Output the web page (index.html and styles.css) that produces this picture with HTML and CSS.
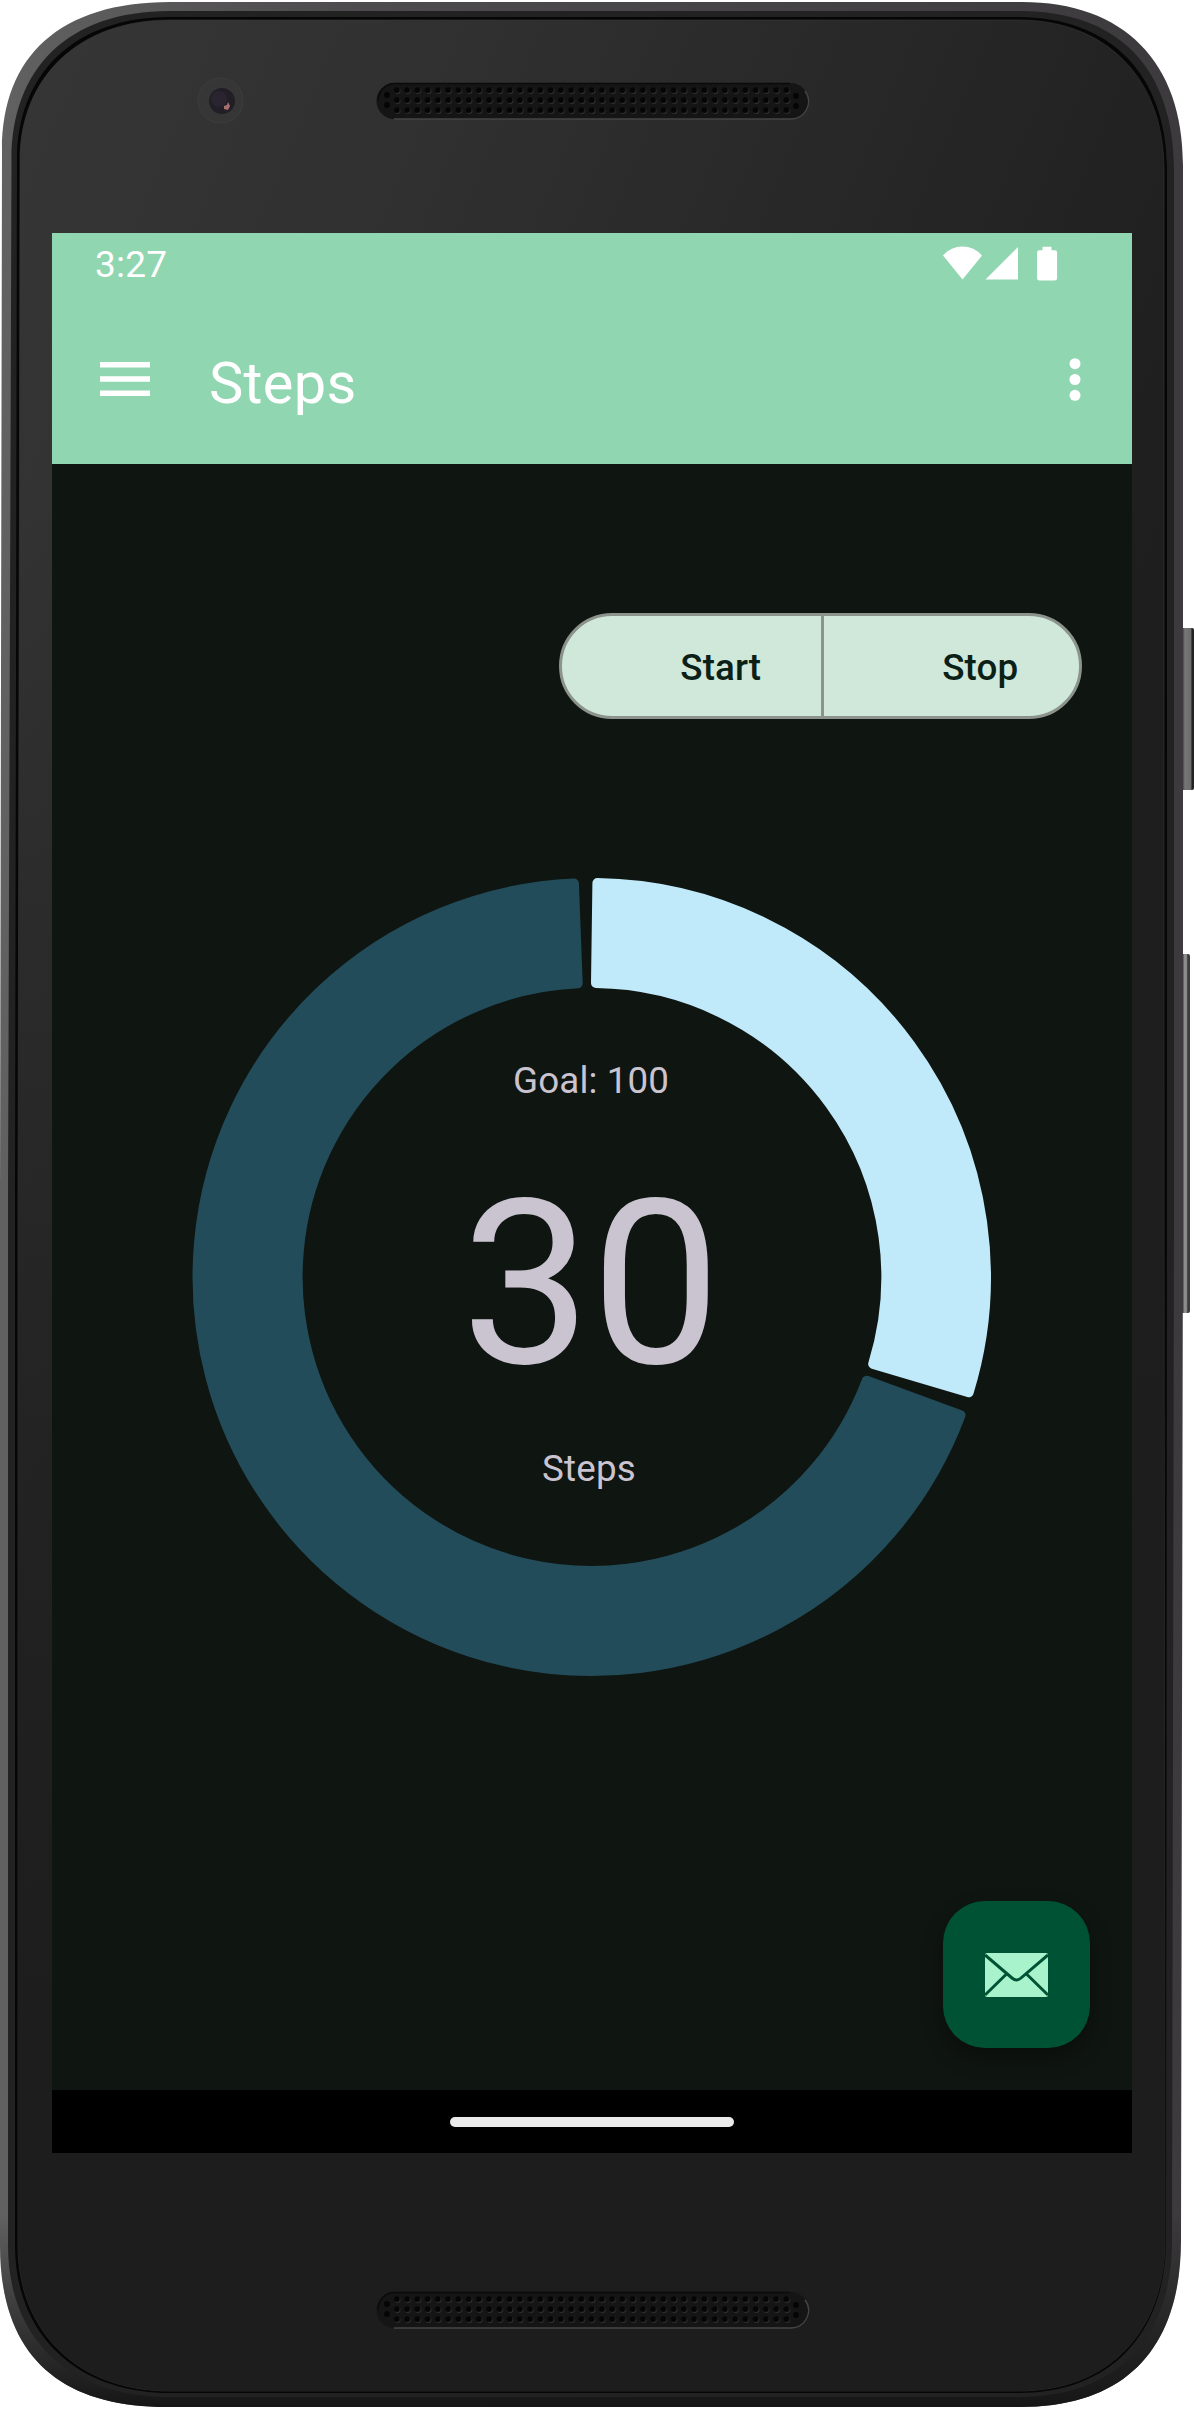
FILE: index.html
```html
<!DOCTYPE html>
<html lang="en">
<head>
<meta charset="utf-8">
<title>Steps</title>
<link rel="stylesheet" href="styles.css">
</head>
<body>
<div class="device">
  <svg class="frame" width="1194" height="2409" viewBox="0 0 1194 2409" aria-hidden="true">
    <defs>
      <linearGradient id="metal" x1="0" y1="0" x2="1" y2="0">
        <stop offset="0" stop-color="#626162"/><stop offset=".3" stop-color="#4d4b4d"/><stop offset="1" stop-color="#3c3a3c"/>
      </linearGradient>
      <linearGradient id="shade" x1="0" y1="0" x2="0" y2="1">
        <stop offset=".92" stop-color="#161616" stop-opacity="0"/><stop offset="1" stop-color="#161616"/>
      </linearGradient>
      <linearGradient id="glass" x1="0" y1="0" x2="1180" y2="500" gradientUnits="userSpaceOnUse">
        <stop offset="0" stop-color="#363637"/><stop offset=".35" stop-color="#303030"/><stop offset="1" stop-color="#1e1e1e"/>
      </linearGradient>
      <linearGradient id="fade" x1="0" y1="0" x2="0" y2="1">
        <stop offset=".2" stop-color="#1d1d1d" stop-opacity="0"/><stop offset=".85" stop-color="#1d1d1d"/>
      </linearGradient>
      <linearGradient id="key" x1="0" y1="0" x2="1" y2="0">
        <stop offset=".1" stop-color="#3a393a"/><stop offset=".3" stop-color="#777"/><stop offset=".75" stop-color="#6c6c6c"/><stop offset=".85" stop-color="#222"/>
      </linearGradient>
      <linearGradient id="key-long" x1="0" y1="0" x2="1" y2="0">
        <stop offset=".2" stop-color="#3a393a"/><stop offset=".35" stop-color="#8c8c8c"/><stop offset=".6" stop-color="#8c8c8c"/><stop offset=".75" stop-color="#3c3c3c"/>
      </linearGradient>
      <pattern id="holes" x="391.800" y="85" width="10.250" height="10" patternUnits="userSpaceOnUse">
        <circle cx="5.900" cy="6" r="2.900" fill="#2f2f2f"/><circle cx="5.100" cy="5.100" r="2.900" fill="#050505"/>
      </pattern>
      <g id="grille">
        <rect x="376.500" y="83" width="432" height="36" rx="18" fill="#151515"/>
        <path d="M394 119H791a17.500 17.500 0 0 0 14-28" fill="none" stroke="#454545" stroke-width="1.300"/>
        <path d="M378 101a17 17 0 0 1 17-17.500H790" fill="none" stroke="#0b0b0b" stroke-width="1.500"/>
        <rect x="391.800" y="85" width="399.700" height="30" fill="url(#holes)"/>
        <g fill="#050505"><circle cx="387" cy="95" r="2.900"/><circle cx="387" cy="105" r="2.900"/><circle cx="796" cy="96" r="2.900"/><circle cx="796" cy="106" r="2.900"/></g>
      </g>
      <path id="body" d="M2 150C2 56 60 2 170 2H1022C1124 2 1183 62 1183 165V1200L1181 2240C1181 2344 1130 2407 1020 2407H170C62 2408 0 2358 0 2245V1200Z"/>
      <path id="panel" d="M20 160C20 78 78 20 170 20H1018C1106 20 1164 78 1164 170V1200L1165 2240C1165 2328 1112 2391 1018 2391H170C78 2391 18 2332 18 2245V1200Z"/>
    </defs>
    <rect x="1181" y="628" width="13" height="162" rx="2" fill="url(#key)"/>
    <rect x="1181" y="954" width="9" height="359" rx="2" fill="url(#key-long)"/>
    <use href="#body" fill="url(#metal)"/>
    <use href="#body" fill="url(#shade)"/>
    <path d="M11.500 160C11.500 68 68 11 170 11H1020C1118 11 1174 68 1174 170V1200L1172 2240C1172 2336 1120 2397 1018 2397H170C70 2397 8 2340 8 2245V1200Z" fill="#232223"/>
    <path d="M17 160C17 74 74 17 170 17H1018C1110 17 1167 74 1167 170V1200L1166 2240C1166 2330 1114 2393 1018 2393H170C76 2393 15 2334 15 2245V1200Z" fill="#060606"/>
    <use href="#panel" fill="url(#glass)" stroke="#383838" stroke-opacity=".6"/>
    <use href="#panel" fill="url(#fade)"/>
    <circle cx="220.500" cy="100.500" r="22.500" fill="#363637" stroke="#3d3d3d"/>
    <circle cx="222" cy="101" r="13" fill="#211e26"/>
    <circle cx="219" cy="99" r="8" fill="#292430"/>
    <path d="M224 106l3-1 1-3 2 4-2 4-4-1z" fill="#a86e6c"/>
    <use href="#grille"/>
    <use href="#grille" y="2209"/>
  </svg>

  <main class="screen">
    <header class="app-bar">
      <div class="status-bar">
        <span class="clock">3:27</span>
        <svg class="status-icons" width="116" height="36" viewBox="0 0 116 36" fill="#fff">
          <path d="M1 9.500Q9 .5 20.500.5T40 9.500L20.500 33.500Z"/>
          <path d="M43.500 33.500L76 1V33.500Z"/>
          <path d="M100.500.8h9v3.400h3.200q2.400 0 2.400 2.400v25.600q0 2.400-2.400 2.400H97.500q-2.400 0-2.400-2.400V6.600q0-2.400 2.400-2.400h3z"/>
        </svg>
      </div>
      <div class="toolbar">
        <svg class="menu-icon" width="50" height="34" viewBox="0 0 50 34" fill="#fff"><path d="M0 0H50V5.500H0ZM0 14.200H50V19.700H0ZM0 28.400H50V33.900H0Z"/></svg>
        <h1 class="title">Steps</h1>
        <svg class="more-icon" width="12" height="44" viewBox="0 0 12 44" fill="#fff"><circle cx="6" cy="5.700" r="5.500"/><circle cx="6" cy="21.500" r="5.500"/><circle cx="6" cy="37.300" r="5.500"/></svg>
      </div>
    </header>

    <section class="content">
      <div class="segmented">
        <button class="segment">Start</button>
        <button class="segment segment-stop">Stop</button>
      </div>
      <div class="progress">
        <svg class="ring" width="800" height="800" viewBox="192.300 877 800 800" stroke-linejoin="round" stroke-width="10">
          <path fill="#c0e9fa" stroke="#c0e9fa" d="M597.700 883.100A394 394 0 0 1 969 1392.300L873.500 1363.900A294 294 0 0 0 596.300 983.100Z"/>
          <path fill="#234c5a" stroke="#234c5a" d="M960.800 1415.200A394 394 0 1 1 574.200 883.400L578 983.300A294 294 0 1 0 867 1380.700Z"/>
        </svg>
        <div class="readout">
          <span class="goal">Goal: 100</span>
          <span class="count">30</span>
          <span class="unit">Steps</span>
        </div>
      </div>
      <button class="fab" aria-label="Send">
        <svg width="63" height="44" viewBox="0 0 63 44">
          <rect width="63" height="44" rx="2" fill="#a8f3cb"/>
          <path d="M0 2L27 25Q31.500 29 36 25L63 2M0 42L21 21.500M63 42L42 21.500" fill="none" stroke="#005235" stroke-width="3"/>
        </svg>
      </button>
    </section>

    <footer class="nav-bar"><div class="home-pill"></div></footer>
  </main>
</div>
</body>
</html>
```

FILE: styles.css
```css
* { box-sizing: border-box; }
body { margin: 0; background: #fff; font-family: Roboto, sans-serif; }
button { border: 0; padding: 0; margin: 0; font: inherit; }

.device { display: grid; width: 1194px; height: 2409px; }
.frame { grid-area: 1 / 1; display: block; }
.screen {
  grid-area: 1 / 1;
  display: flex;
  flex-direction: column;
  width: 1080px;
  height: 1920px;
  margin: 233px 0 0 52px;
  background: #0f1511;
  z-index: 1;
}

.app-bar { height: 231px; background: #90d6b1; color: #fff; }
.status-bar { display: flex; justify-content: space-between; height: 63px; padding: 0 74px 0 43px; }
.clock { font-size: 37px; line-height: 64px; letter-spacing: .2px; }
.status-icons { margin-top: 13px; }
.toolbar { display: flex; align-items: center; height: 168px; padding: 0 51px 0 48px; }
.menu-icon { margin-bottom: 2px; }
.title { flex: 1; margin: 6px 0 0 59px; font-size: 57.75px; font-weight: 400; line-height: 68px; letter-spacing: .3px; }

.content { display: flex; flex-direction: column; flex: 1; }
.segmented {
  display: flex;
  align-self: flex-end;
  width: 523px;
  height: 106px;
  margin: 149px 50px 0 0;
  border: 3px solid #8b938c;
  border-radius: 53px;
  background: #d0e8d9;
  overflow: hidden;
}
.segment {
  width: 259px;
  padding: 2px 0 0 59px;
  background: none;
  color: #0b2017;
  font-size: 36.75px;
  font-weight: 500;
  letter-spacing: .1px;
}
.segment-stop { padding-left: 58px; border-left: 3px solid #8b938c; }

.progress { display: grid; width: 800px; height: 800px; margin: 158px 0 0 140px; }
.ring, .readout { grid-area: 1 / 1; }
.readout { display: flex; flex-direction: column; align-items: center; color: #cac4d0; font-size: 36.75px; line-height: 43px; }
.goal { margin: 182px 2px 0 0; letter-spacing: .1px; }
.count { margin: 44px 2px 0 0; font-size: 231px; line-height: 277px; }
.unit { margin: 24px 6px 0 0; letter-spacing: .2px; }

.fab {
  display: grid;
  place-items: center;
  align-self: flex-end;
  width: 147px;
  height: 147px;
  margin: 224px 42px 0 0;
  border-radius: 42px;
  background: #005235;
  box-shadow: 0 10px 22px rgba(0, 0, 0, .3);
}

.nav-bar { display: grid; place-items: center; height: 63px; background: #000; }
.home-pill { width: 284px; height: 10px; border-radius: 5px; background: #ebebeb; }
```
